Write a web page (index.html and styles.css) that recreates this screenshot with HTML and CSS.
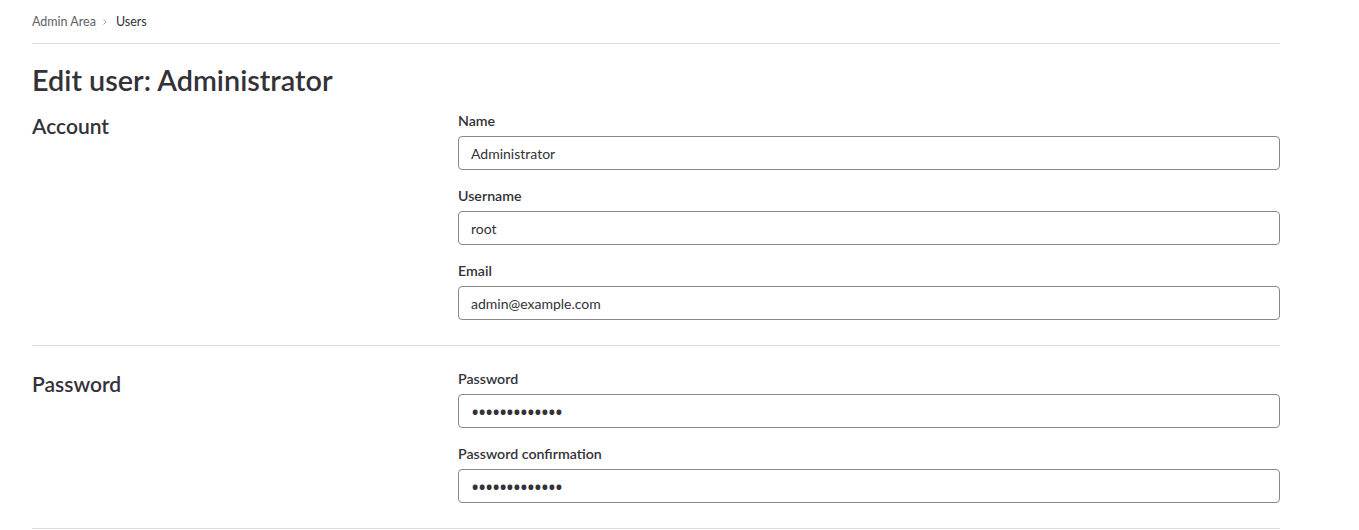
FILE: index.html
```html
<!DOCTYPE html>
<html lang="en">
<head>
<meta charset="utf-8">
<title>Edit user: Administrator</title>
<link rel="stylesheet" href="styles.css">
</head>
<body>
<div class="page">
  <nav class="breadcrumbs">
    <a class="crumb" href="#">Admin Area</a>
    <svg class="chev" width="8" height="8" viewBox="0 0 8 8"><path d="M2.5 1.5 L5 4 L2.5 6.5" fill="none" stroke="#a4a3a8" stroke-width="1"/></svg>
    <span class="crumb current">Users</span>
  </nav>
  <h1 class="page-title">Edit user: Administrator</h1>
  <form class="user-form">
    <section class="settings-row first">
      <h2 class="section-title">Account</h2>
      <div class="fields">
        <div class="field">
          <label class="label" for="name">Name</label>
          <input class="input" id="name" type="text" value="Administrator">
        </div>
        <div class="field">
          <label class="label" for="username">Username</label>
          <input class="input" id="username" type="text" value="root">
        </div>
        <div class="field">
          <label class="label" for="email">Email</label>
          <input class="input" id="email" type="text" value="admin@example.com">
        </div>
      </div>
    </section>
    <section class="settings-row">
      <h2 class="section-title">Password</h2>
      <div class="fields">
        <div class="field">
          <label class="label" for="pw">Password</label>
          <input class="input secret" id="pw" type="password" value="password12345">
        </div>
        <div class="field">
          <label class="label" for="pwc">Password confirmation</label>
          <input class="input secret" id="pwc" type="password" value="password12345">
        </div>
      </div>
    </section>
  </form>
</div>
</body>
</html>
```

FILE: styles.css
```css
html, body {
  margin: 0;
  padding: 0;
  background: #fff;
}
body {
  font-family: "Lato", "Noto Sans", sans-serif;
  color: #333238;
  font-size: 14px;
}
.page {
  max-width: 1280px;
  padding-left: 32px;
  box-sizing: border-box;
}
.breadcrumbs {
  height: 43px;
  display: flex;
  align-items: center;
  border-bottom: 1px solid #dcdcde;
  font-size: 12.5px;
}
.crumb {
  color: #626168;
  text-decoration: none;
}
.crumb.current {
  color: #333238;
}
.chev {
  margin: 0 7px 0 5px;
}
.page-title {
  margin: 0;
  padding-top: 19px;
  font-size: 28.8px;
  font-weight: 600;
  line-height: 34px;
}
.settings-row {
  display: grid;
  grid-template-columns: 426px 1fr;
  border-bottom: 1px solid #dcdcde;
  padding: 23px 0 9px;
}
.settings-row.first {
  padding-top: 14px;
}
.section-title {
  margin: 1px 0 0;
  font-size: 21px;
  font-weight: 600;
  line-height: 28px;
}
.field {
  display: flex;
  flex-direction: column;
  margin-bottom: 16px;
}
.label {
  font-weight: 600;
  font-size: 14.2px;
  line-height: 20px;
  margin-bottom: 5px;
}
.input {
  height: 34px;
  box-sizing: border-box;
  border: 1px solid #89888d;
  border-radius: 4px;
  padding: 0 12px;
  font-family: inherit;
  font-size: 14px;
  color: #333238;
  background: #fff;
  outline: none;
}
.input.secret {
  font-family: "Noto Sans", sans-serif;
  font-size: 22px;
  letter-spacing: -1.3px;
  padding-left: 12px;
}
```
